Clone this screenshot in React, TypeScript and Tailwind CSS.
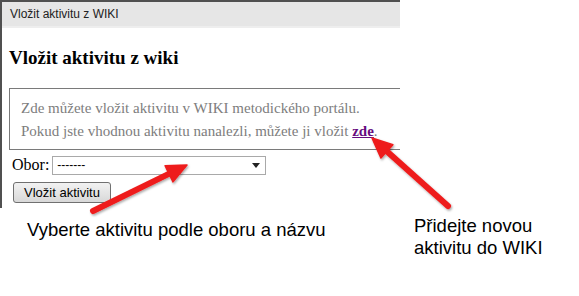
import React from 'react';

type Pt = [number, number];

const Arrow = ({ from, to }: { from: Pt; to: Pt }) => {
    const dx = to[0] - from[0];
    const dy = to[1] - from[1];
    const len = Math.hypot(dx, dy);
    const ux = dx / len;
    const uy = dy / len;
    const head = 20;
    const half = 9;
    const bx = to[0] - ux * head;
    const by = to[1] - uy * head;
    const pts = [
        `${to[0]},${to[1]}`,
        `${bx - uy * half},${by + ux * half}`,
        `${bx + uy * half},${by - ux * half}`,
    ].join(' ');
    return (
        <g filter="url(#shadow)">
            <line x1={from[0]} y1={from[1]} x2={bx + ux * 2} y2={by + uy * 2} stroke="#ee1c1c" strokeWidth={6} strokeLinecap="round" />
            <polygon points={pts} fill="#ee1c1c" stroke="#ee1c1c" strokeWidth={1.5} strokeLinejoin="round" />
        </g>
    );
};

export default function App() {
    return (
        <div className="relative w-[579px] h-[296px] bg-white overflow-hidden">
            {/* okno s formulářem */}
            <div className="w-[400px] h-[208px] border-t-2 border-l-2 border-[#505050] flex flex-col">
                <div className="h-[26px] bg-[#e6e6e6] border-b-2 border-[#eeeeee] flex items-center pl-[8px] text-[12px] text-[#222] font-['Liberation_Sans',Arial,sans-serif]">
                    Vložit aktivitu z WIKI
                </div>
                <div className="flex flex-col pl-[7px] font-['Liberation_Serif','Times_New_Roman',serif]">
                    <h2 className="mt-[19px] text-[19px] leading-[22px] font-bold text-black">Vložit aktivitu z wiki</h2>
                    <div className="mt-[19px] h-[62px] border border-r-0 border-[#7a7a7a] pl-[11px] pt-[8px] text-[15px] leading-[23px] text-[#7d7d7d]">
                        <p>Zde můžete vložit aktivitu v WIKI metodického portálu.</p>
                        <p>
                            Pokud jste vhodnou aktivitu nanalezli, můžete ji vložit{' '}
                            <a href="#" className="font-bold text-[#660b80] underline">zde</a>.
                        </p>
                    </div>
                    <div className="mt-[3px] flex items-center gap-[3px] pl-[3px]">
                        <span className="text-[16px] text-black">Obor:</span>
                        <div className="w-[214px] h-[19px] border border-[#a9a9a9] flex items-center justify-between pl-[4px] pr-[5px] text-[12px] text-black font-['Liberation_Sans',Arial,sans-serif]">
                            <span>-------</span>
                            <svg width="8" height="5" viewBox="0 0 8 5"><polygon points="0,0 8,0 4,5" fill="#222" /></svg>
                        </div>
                    </div>
                    <button className="mt-[5px] ml-[4px] w-[98px] h-[21px] rounded-[3px] border border-[#707070] bg-gradient-to-b from-[#f2f2f2] to-[#d8d8d8] text-[13px] text-black font-['Liberation_Sans',Arial,sans-serif]">
                        Vložit aktivitu
                    </button>
                </div>
            </div>

            {/* popisky */}
            <div className="absolute left-[27px] top-[219px] text-[18.5px] leading-[22px] text-black font-['Liberation_Sans',Arial,sans-serif]">
                Vyberte aktivitu podle oboru a názvu
            </div>
            <div className="absolute left-[414px] top-[215px] text-[18.5px] leading-[22px] text-black font-['Liberation_Sans',Arial,sans-serif]">
                <div>Přidejte novou</div>
                <div>aktivitu do WIKI</div>
            </div>

            <svg className="absolute inset-0" width="579" height="296">
                <defs>
                    <filter id="shadow" x="-20%" y="-20%" width="140%" height="140%">
                        <feDropShadow dx="1" dy="1.5" stdDeviation="1.2" floodColor="#000" floodOpacity="0.35" />
                    </filter>
                </defs>
                <Arrow from={[93, 211]} to={[187, 165]} />
                <Arrow from={[448, 206]} to={[372, 138]} />
            </svg>
        </div>
    );
}
